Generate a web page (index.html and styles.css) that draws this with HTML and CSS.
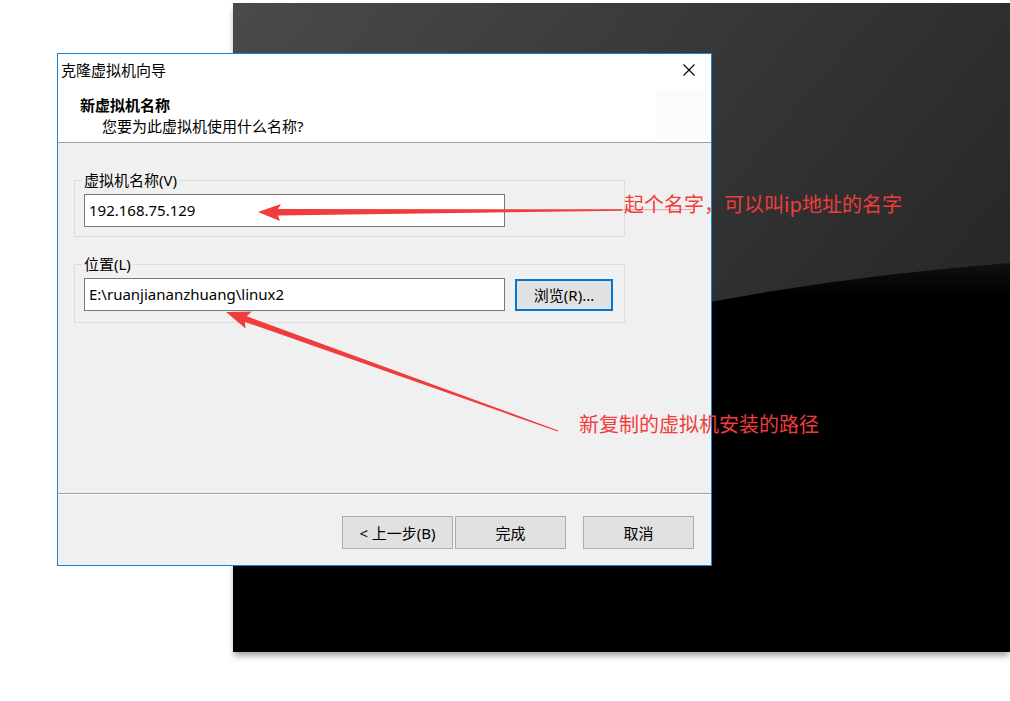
FILE: index.html
```html
<!DOCTYPE html>
<html lang="zh-CN">
<head>
<meta charset="utf-8">
<title>克隆虚拟机向导</title>
<link rel="stylesheet" href="styles.css">
</head>
<body>
<div class="desktop">
  <div class="screen">
    <svg class="screen-art" width="777" height="649" viewBox="0 0 777 649">
      <defs>
        <linearGradient id="gTop" x1="0" y1="0" x2="1" y2="0.7">
          <stop offset="0" stop-color="#4a4a4a"/>
          <stop offset="0.55" stop-color="#333333"/>
          <stop offset="1" stop-color="#222222"/>
        </linearGradient>
        <linearGradient id="gBottom" x1="0" y1="0" x2="0" y2="1">
          <stop offset="0" stop-color="#111111"/>
          <stop offset="0.08" stop-color="#000000"/>
          <stop offset="1" stop-color="#000000"/>
        </linearGradient>
      </defs>
      <rect width="777" height="649" fill="url(#gTop)"/>
      <path d="M0,430 Q380,290 777,260 L777,649 L0,649 Z" fill="url(#gBottom)"/>
    </svg>
  </div>

  <section class="dialog">
    <header class="titlebar">
      <span class="title">克隆虚拟机向导</span>
      <button class="close" aria-label="关闭">
        <svg width="12" height="12" viewBox="0 0 12 12"><path d="M0.5 0.5 L11.5 11.5 M11.5 0.5 L0.5 11.5" stroke="#000" stroke-width="1.1" fill="none"/></svg>
      </button>
    </header>
    <div class="banner">
      <div class="banner-text">
        <h1>新虚拟机名称</h1>
        <p>您要为此虚拟机使用什么名称?</p>
      </div>
      <div class="banner-img"></div>
    </div>
    <div class="content">
      <fieldset class="group">
        <legend>虚拟机名称(V)</legend>
        <div class="row">
          <div class="field">192.168.75.129</div>
        </div>
      </fieldset>
      <fieldset class="group group-loc">
        <legend>位置(L)</legend>
        <div class="row">
          <div class="field">E:\ruanjiananzhuang\linux2</div>
          <button class="btn btn-focus">浏览(R)...</button>
        </div>
      </fieldset>
    </div>
    <footer class="footer">
      <button class="btn btn-wide">&lt; 上一步(B)</button>
      <button class="btn btn-wide">完成</button>
      <button class="btn btn-wide btn-cancel">取消</button>
    </footer>
  </section>

  <svg class="marks" width="1010" height="701" viewBox="0 0 1010 701">
    <line x1="600" y1="209.8" x2="692" y2="209.6" stroke="#f03c3c" stroke-width="1" opacity="0.45"/>
    <polygon fill="#f03c3c" points="258,212 281,204 278,209 622,209.3 622,210.7 278,215.5 280,221"/>
    <polygon fill="#f03c3c" points="226,312 251.6,311.6 246.8,316.3 558.2,430.4 557.8,431.6 244.8,321.9 245.6,328.6"/>
  </svg>
  <span class="note note-name">起个名字，可以叫ip地址的名字</span>
  <span class="note note-path">新复制的虚拟机安装的路径</span>
</div>
</body>
</html>
```

FILE: styles.css
```css
* {
  box-sizing: border-box;
}

html,
body {
  margin: 0;
  padding: 0;
  background: #ffffff;
}

body {
  font-family: "Noto Sans", "Noto Sans CJK SC", sans-serif;
  font-size: 15px;
  color: #000000;
}

.desktop {
  position: relative;
  width: 1010px;
  height: 701px;
  overflow: hidden;
}

.screen {
  position: absolute;
  left: 233px;
  top: 3px;
  width: 777px;
  height: 649px;
  box-shadow: 0 5px 6px -1px rgba(0, 0, 0, 0.35);
}

.screen-art {
  display: block;
}

.dialog {
  position: absolute;
  left: 57px;
  top: 53px;
  width: 655px;
  height: 513px;
  border: 1px solid #1883d7;
  background: #f0f0f0;
  display: flex;
  flex-direction: column;
}

.titlebar {
  height: 32px;
  background: #ffffff;
  display: flex;
  align-items: center;
  justify-content: space-between;
  padding-left: 3px;
}

.title {
  font-size: 15px;
  line-height: 32px;
}

.close {
  width: 44px;
  height: 32px;
  border: 0;
  background: transparent;
  padding: 0;
  display: flex;
  align-items: center;
  justify-content: center;
}

.banner {
  height: 57px;
  background: #ffffff;
  border-bottom: 1px solid #a0a0a0;
  display: flex;
  justify-content: space-between;
  align-items: flex-start;
}

.banner-text {
  padding: 11px 0 0 22px;
}

.banner h1 {
  margin: 0;
  font-size: 15px;
  font-weight: 700;
  line-height: 16px;
}

.banner p {
  margin: 5px 0 0 22px;
  font-size: 15px;
  line-height: 16px;
}

.banner-img {
  width: 50px;
  height: 49px;
  margin: 4px 4px 0 0;
  background: #fbfbfb;
}

.content {
  flex: 1;
  padding: 27px 86px 0 16px;
}

.group {
  margin: 0;
  padding: 4px 9px 9px;
  border: 1px solid #dcdcdc;
  min-width: 0;
}

.group legend {
  padding: 0 2px;
  margin-left: -2px;
  font-size: 15px;
  line-height: 20px;
}

.group-loc {
  margin-top: 17px;
  padding-bottom: 11px;
}

.row {
  display: flex;
  align-items: center;
  gap: 10px;
}

.field {
  width: 421px;
  height: 33px;
  border: 1px solid #7a7a7a;
  background: #ffffff;
  padding: 0 4px;
  line-height: 31px;
  white-space: nowrap;
}

.btn {
  font-family: inherit;
  font-size: 15px;
  color: #000000;
  background: #e1e1e1;
  border: 1px solid #adadad;
  padding: 0;
  height: 33px;
}

.btn-focus {
  width: 98px;
  height: 32px;
  border: 2px solid #0078d7;
}

.footer {
  height: 72px;
  border-top: 1px solid #a0a0a0;
  box-shadow: inset 0 1px 0 #ffffff;
  display: flex;
  justify-content: flex-end;
  align-items: flex-start;
  gap: 2px;
  padding: 22px 17px 0 0;
}

.btn-wide {
  width: 111px;
}

.btn-cancel {
  margin-left: 15px;
}

.marks {
  position: absolute;
  left: 0;
  top: 0;
  pointer-events: none;
}

.note {
  position: absolute;
  font-family: "Noto Sans CJK SC", "Noto Sans", sans-serif;
  font-size: 20px;
  line-height: 24px;
  color: #f03c3c;
  white-space: nowrap;
}

.note-name {
  left: 624px;
  top: 192px;
}

.note-path {
  left: 579px;
  top: 412px;
}
```
